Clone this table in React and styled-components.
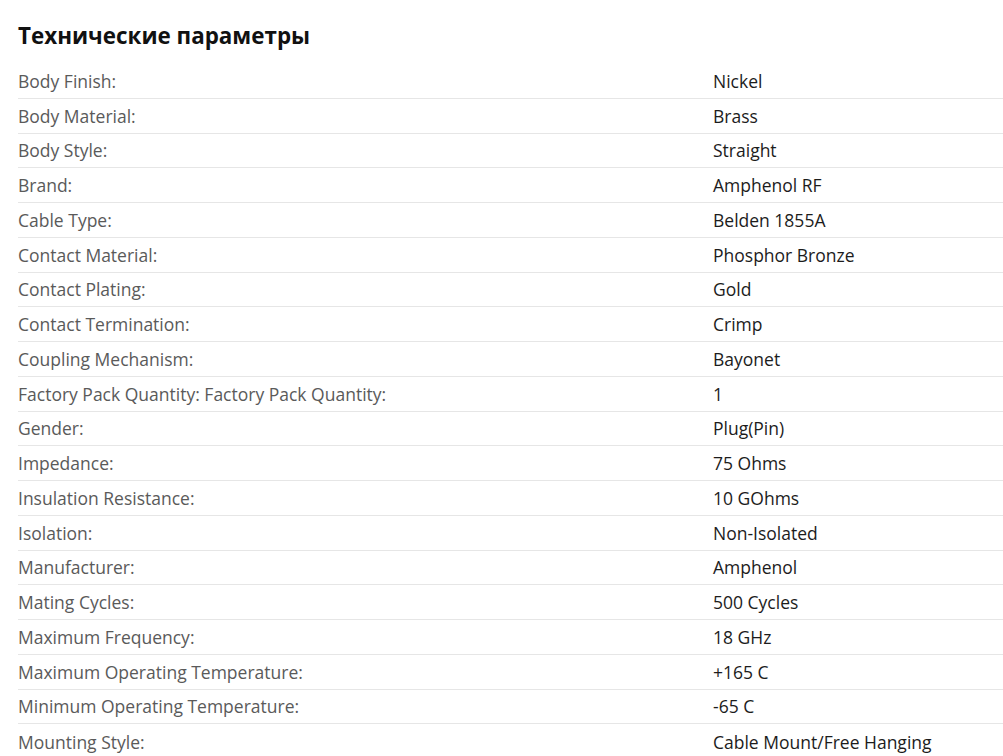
import React from "react";
import styled, { createGlobalStyle } from "styled-components";

const GlobalStyle = createGlobalStyle`
  body {
    margin: 0;
    background: #fff;
    font-family: "Open Sans", "Liberation Sans", sans-serif;
  }
`;

const Section = styled.section`
  padding: 21px 0 0 18px;
`;

const Title = styled.h2`
  margin: 0 0 13px;
  font-size: 22.4px;
  font-weight: 700;
  line-height: 30px;
  color: #111;
`;

const Table = styled.div`
  display: flex;
  flex-direction: column;
`;

const Row = styled.div`
  display: grid;
  grid-template-columns: 695px 1fr;
  height: 34.75px;
  align-items: center;
  border-bottom: 1px solid #e6e6e6;
  box-sizing: border-box;
  font-size: 17.5px;

  &:last-child {
    border-bottom: none;
  }
`;

const Label = styled.span`
  color: #5a5a5a;
`;

const Value = styled.span`
  color: #1c1c1c;
`;

const params = [
  ["Body Finish:", "Nickel"],
  ["Body Material:", "Brass"],
  ["Body Style:", "Straight"],
  ["Brand:", "Amphenol RF"],
  ["Cable Type:", "Belden 1855A"],
  ["Contact Material:", "Phosphor Bronze"],
  ["Contact Plating:", "Gold"],
  ["Contact Termination:", "Crimp"],
  ["Coupling Mechanism:", "Bayonet"],
  ["Factory Pack Quantity: Factory Pack Quantity:", "1"],
  ["Gender:", "Plug(Pin)"],
  ["Impedance:", "75 Ohms"],
  ["Insulation Resistance:", "10 GOhms"],
  ["Isolation:", "Non-Isolated"],
  ["Manufacturer:", "Amphenol"],
  ["Mating Cycles:", "500 Cycles"],
  ["Maximum Frequency:", "18 GHz"],
  ["Maximum Operating Temperature:", "+165 C"],
  ["Minimum Operating Temperature:", "-65 C"],
  ["Mounting Style:", "Cable Mount/Free Hanging"],
];

export default function App() {
  return (
    <>
      <GlobalStyle />
      <Section>
        <Title>Технические параметры</Title>
        <Table>
          {params.map(([label, value]) => (
            <Row key={label}>
              <Label>{label}</Label>
              <Value>{value}</Value>
            </Row>
          ))}
        </Table>
      </Section>
    </>
  );
}
